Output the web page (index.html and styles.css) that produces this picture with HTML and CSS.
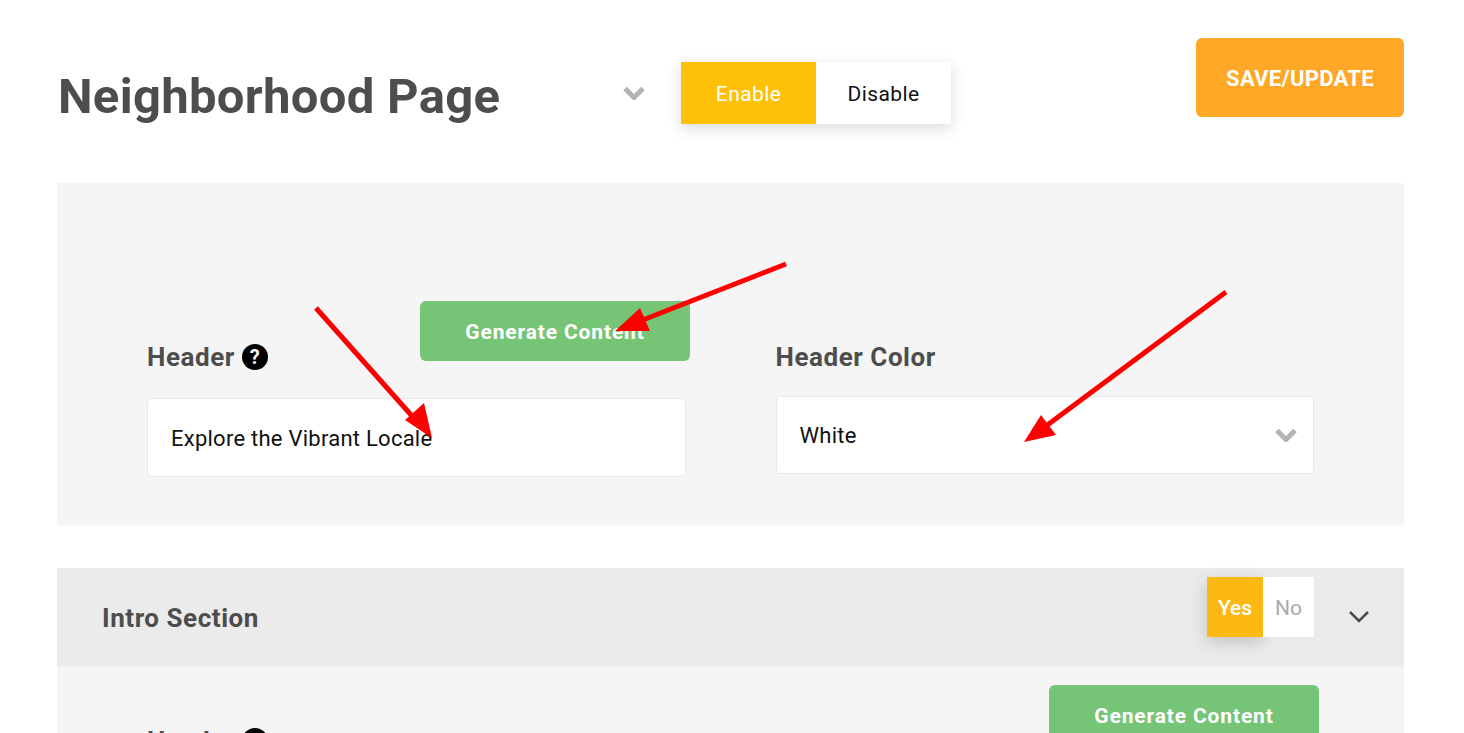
FILE: index.html
```html
<!DOCTYPE html>
<html lang="en">
<head>
<meta charset="utf-8">
<title>Neighborhood Page</title>
<link rel="stylesheet" href="styles.css">
</head>
<body>
<div class="page">
  <div class="topbar">
    <h1 class="title">Neighborhood Page</h1>
    <svg class="chev chev-title" viewBox="0 0 22 14"><path d="M2 2.500l9 9 9-9" /></svg>
    <div class="toggle">
      <span class="toggle-on">Enable</span>
      <span class="toggle-off">Disable</span>
    </div>
    <button class="save">SAVE/UPDATE</button>
  </div>

  <section class="panel">
    <div class="col col-left">
      <button class="gen gen-first">Generate Content</button>
      <div class="label">Header <span class="help">?</span></div>
      <div class="field">Explore the Vibrant Locale</div>
    </div>
    <div class="col col-right">
      <div class="label">Header Color</div>
      <div class="field select">White
        <svg class="chev chev-select" viewBox="0 0 22 14"><path d="M2 2.500l9 9 9-9" /></svg>
      </div>
    </div>
  </section>

  <section class="intro-bar">
    <h2 class="intro-title">Intro Section</h2>
    <div class="yesno"><span class="yes">Yes</span><span class="no">No</span></div>
    <svg class="caret" viewBox="0 0 22 14"><path d="M2 2l9 9 9-9" /></svg>
  </section>
  <section class="intro-body">
    <button class="gen gen-second">Generate Content</button>
    <div class="label">Header <span class="help">?</span></div>
  </section>
</div>

<svg class="arrows" viewBox="0 0 1464 733">
  <g class="arrow">
    <line x1="316" y1="308" x2="420" y2="425"/>
    <polygon points="432,438 405,420 424,403"/>
    <line x1="786" y1="264" x2="635" y2="323"/>
    <polygon points="615,331 640,308 650,331"/>
    <line x1="1226" y1="292" x2="1042" y2="429"/>
    <polygon points="1024,442 1041,415 1056,435"/>
  </g>
</svg>
</body>
</html>
```
FILE: styles.css
```css
* { box-sizing: border-box; }
html, body { margin: 0; height: 733px; overflow: hidden; background: #fff; }
body { font-family: "Roboto", "Liberation Sans", sans-serif; color: #4d4d4d; position: relative; }
.page { padding: 38px 60px 0 57px; }
.topbar { display: flex; align-items: flex-start; height: 145px; }
.title { margin: 32px 0 0 1px; width: 564px; font-size: 49px; line-height: 54px; font-weight: 700; letter-spacing: .3px; color: #4d4d4d; white-space: nowrap; }
.chev { fill: none; stroke: #b3b3b3; stroke-width: 5; }
.chev-title { width: 22px; height: 14px; margin-top: 48px; margin-left: 1px; }
.toggle { display: flex; margin: 24px 0 0 36px; height: 62px; box-shadow: 0 4px 14px rgba(0,0,0,.15); }
.toggle span { display: flex; align-items: center; justify-content: center; padding-top: 2px; font-size: 21px; letter-spacing: .4px; }
.toggle-on { width: 135px; background: #ffc107; color: #fff; }
.toggle-off { width: 135px; background: #fff; color: #111; }
.save { margin-left: auto; width: 208px; height: 79px; padding: 2px 0 0; border: 0; border-radius: 6px; background: #ffa726; color: #fff; font: 700 22px "Roboto", sans-serif; letter-spacing: .3px; }
.panel { display: flex; gap: 90px; height: 342px; padding: 0 90px; background: #f5f5f5; }
.col { position: relative; width: 539px; }
.col-left { padding-top: 156px; }
.col-right { padding-top: 156px; }
.label { font-size: 26px; font-weight: 700; line-height: 36px; letter-spacing: .55px; color: #4d4d4d; display: flex; align-items: center; gap: 7px; }
.help { display: inline-flex; width: 26px; height: 26px; border-radius: 50%; background: #000; color: #fff; font-size: 20px; letter-spacing: 0; align-items: center; justify-content: center; }
.field { margin-top: 23px; height: 79px; padding: 2px 23px 0; display: flex; align-items: center; background: #fff; border: 1px solid #e8e8e8; border-radius: 4px; font-size: 22px; letter-spacing: .25px; color: #111; }
.col-right .field { margin-top: 21px; height: 78px; padding-top: 0; }
.select { justify-content: space-between; padding-right: 16px; }
.chev-select { width: 22px; height: 14px; }
.gen { border: 0; width: 270px; height: 60px; padding: 2px 0 0; border-radius: 6px; background: #76c576; color: #fff; font: 700 21px "Roboto", sans-serif; letter-spacing: .85px; }
.gen-first { position: absolute; left: 273px; top: 118px; }
.intro-bar { display: flex; align-items: flex-start; margin-top: 43px; height: 99px; background: #ebebeb; padding-left: 45px; }
.intro-title { margin: 32px 0 0; font-size: 26px; line-height: 36px; font-weight: 700; letter-spacing: .55px; color: #4d4d4d; }
.yesno { display: flex; margin: 9px 0 0 auto; height: 60px; }
.yesno span { display: flex; align-items: center; justify-content: center; padding-top: 2px; font-size: 21px; }
.yesno .yes { width: 56px; background: #fdb913; color: #fff; font-weight: 500; box-shadow: 0 5px 16px rgba(0,0,0,.18); }
.yesno .no { width: 51px; background: #fff; color: #aaa; position: relative; }
.caret { width: 22px; height: 14px; margin: 42px 34px 0 34px; fill: none; stroke: #4d4d4d; stroke-width: 2.5; }
.intro-body { position: relative; height: 80px; background: #f5f5f5; padding: 56px 0 0 90px; }
.gen-second { position: absolute; left: 992px; top: 18px; }
.arrows { position: absolute; left: 0; top: 0; width: 1464px; height: 733px; pointer-events: none; }
.arrow line { stroke: #f00; stroke-width: 5; }
.arrow polygon { fill: #f00; }
```
